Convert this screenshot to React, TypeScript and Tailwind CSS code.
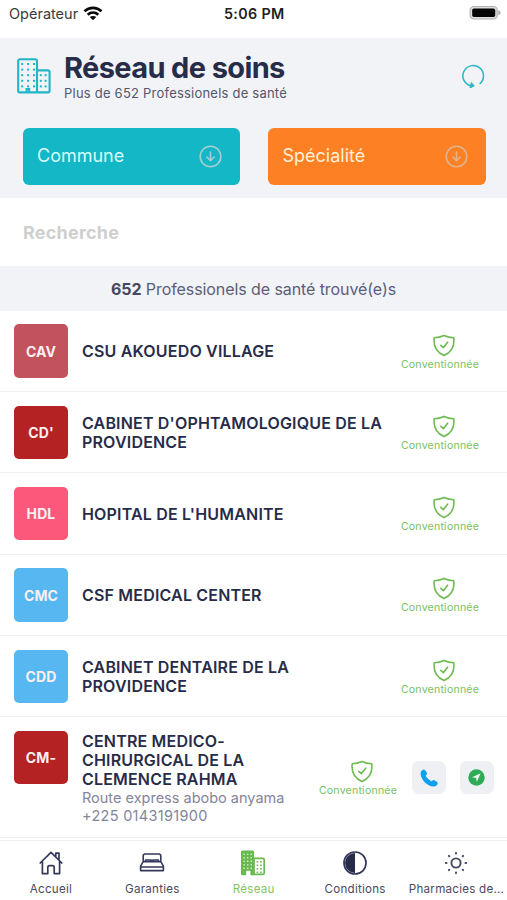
import React from 'react';

type Provider = {
  initials: string;
  lines: string[];
  color: string;
  address?: string;
  phone?: string;
};

const providers: Provider[] = [
  { initials: 'CAV', lines: ['CSU AKOUEDO VILLAGE'], color: 'bg-[#c2525c]' },
  { initials: "CD'", lines: ["CABINET D'OPHTAMOLOGIQUE DE LA", 'PROVIDENCE'], color: 'bg-[#b42224]' },
  { initials: 'HDL', lines: ["HOPITAL DE L'HUMANITE"], color: 'bg-[#fb587c]' },
  { initials: 'CMC', lines: ['CSF MEDICAL CENTER'], color: 'bg-[#56b7f1]' },
  { initials: 'CDD', lines: ['CABINET DENTAIRE DE LA', 'PROVIDENCE'], color: 'bg-[#56b7f1]' },
  {
    initials: 'CM-',
    lines: ['CENTRE MEDICO-', 'CHIRURGICAL DE LA', 'CLEMENCE RAHMA'],
    color: 'bg-[#b42224]',
    address: 'Route express abobo anyama',
    phone: '+225 0143191900',
  },
];

const tallWindows = [0, 1, 2].flatMap((i) => [0, 1, 2, 3, 4].map((r) => [4.2 + i * 5.9, 5 + r * 5.6]));
const lowWindows = [0, 1].flatMap((i) => [0, 1, 2].map((r) => [22.8 + i * 4.8, 16.2 + r * 5.6]));

function BuildingOutline() {
  return (
    <svg className="block h-[36px] w-[34px]" viewBox="0 0 34 36" fill="none" stroke="#22b5c6">
      <path d="M1.2 33.8V3.2Q1.2 1.2 3.2 1.2H18Q20 1.2 20 3.2V33.8M20 12.4H30.6Q32.6 12.4 32.6 14.4V32.8Q32.6 34.4 31 34.4H2.6Q1.2 34.4 1.2 33M9.6 34V31H12.2V34" strokeWidth="2.1" />
      <g fill="#22b5c6" stroke="none">
        {tallWindows.map(([x, y]) => <rect key={`${x}-${y}`} x={x} y={y} width="2" height="2" />)}
        {lowWindows.map(([x, y]) => <rect key={`${x}-${y}`} x={x} y={y} width="2" height="2" />)}
      </g>
    </svg>
  );
}

function BuildingFilled() {
  return (
    <svg className="block size-[26px]" viewBox="0 0 26 26" fill="none">
      <path d="M1 24V2Q1 .6 2.4 .6H12.6Q14 .6 14 2V25.2H10.4V20.8H6.2V25.2H2.2Q1 25.2 1 24Z" fill="#6ab94e" />
      <path d="M14 8.4H22.8Q24.2 8.4 24.2 9.8V23Q24.2 24.4 22.8 24.4H14Z" stroke="#6ab94e" strokeWidth="1.7" />
      <g fill="#d9f0d0">
        {[0, 1, 2].flatMap((c) => [0, 1, 2, 3, 4].map((r) => (
          <rect key={`${c}${r}`} x={3.4 + c * 3.6} y={3.6 + r * 3.5} width="1.4" height="1.4" />
        )))}
      </g>
      <g fill="#6ab94e">
        {[0, 1].flatMap((c) => [0, 1, 2, 3].map((r) => (
          <rect key={`${c}${r}`} x={16.6 + c * 3.5} y={11 + r * 3.5} width="1.6" height="1.6" />
        )))}
      </g>
    </svg>
  );
}

function Shield() {
  return (
    <svg className="ml-[7px] block h-[23px] w-[24px]" viewBox="0 0 24 23" fill="none" stroke="#6fbb53" strokeWidth="1.6" strokeLinecap="round" strokeLinejoin="round">
      <path d="M12 1.4C9.2 2.7 5.5 3.6 2.2 3.8C1.3 12 4.4 18.2 12 21.6C19.6 18.2 22.7 12 21.8 3.8C18.5 3.6 14.8 2.7 12 1.4Z" />
      <path d="M8.8 11.4L11.3 13.7L15.6 8.2" />
    </svg>
  );
}

function Covered() {
  return (
    <div className="flex w-[82px] shrink-0 flex-col items-center">
      <Shield />
      <span className="mt-[1px] text-[10.6px] leading-[14px] tracking-[0.2px] text-[#79c25f]">Conventionnée</span>
    </div>
  );
}

function Dropdown({ label, tone, ring }: { label: string; tone: string; ring: string }) {
  return (
    <button className={`flex h-[57.5px] w-[217.5px] items-center justify-between rounded-[6px] pl-[14.5px] pr-[18px] ${tone}`}>
      <span className="text-[18px] leading-6">{label}</span>
      <svg className={`block size-[23px] ${ring}`} viewBox="0 0 23 23" fill="none" stroke="currentColor" strokeWidth="1.6" strokeLinecap="round" strokeLinejoin="round">
        <circle cx="11.5" cy="11.5" r="10.3" />
        <path d="M11.5 7V15.5M7.8 12L11.5 15.7L15.2 12" />
      </svg>
    </button>
  );
}

function Row({ p }: { p: Provider }) {
  const detailed = Boolean(p.phone);
  return (
    <li className={`flex border-b border-[#eff0f3] pl-[14.3px] ${detailed ? 'h-[120.4px]' : 'h-[81.3px]'}`}>
      <div className={`mt-[13.6px] flex size-[53.4px] shrink-0 items-center justify-center rounded-[5px] text-[14px] font-bold tracking-[0.1px] text-[#fbeff0] ${p.color}`}>
        {p.initials}
      </div>
      <div className={`ml-[14.3px] flex flex-1 flex-col justify-center whitespace-nowrap ${detailed ? 'pt-[2px]' : 'pt-[1.5px]'}`}>
        {p.lines.map((line) => (
          <p key={line} className="text-[16px] font-semibold leading-[19px] tracking-[0.18px] text-[#272c49]">{line}</p>
        ))}
        {p.address && <p className="text-[14.5px] leading-[18px] tracking-[0px] text-[#84859a]">{p.address}</p>}
        {p.phone && <p className="text-[14.5px] leading-[17px] tracking-[0.3px] text-[#84859a]">{p.phone}</p>}
      </div>
      {detailed ? (
        <div className="flex items-center pr-[13.5px] pt-[1px]">
          <div className="pt-[3px]"><Covered /></div>
          <div className="ml-[13px] flex size-[33.5px] items-center justify-center rounded-[7px] bg-[#eef0f4]">
            <svg className="block size-[20px]" viewBox="0 0 20 20" fill="#0da0ec">
              <path d="M4.8 1.5C3.2 1.7 1.5 3.2 1.6 5.4C2 12 8.4 18.2 14.5 18.4C16.8 18.5 18.6 16.8 18.8 15.2C18.9 14.4 15.5 12 14.6 12C13.7 12 13.2 13.3 12.4 13.2C10.7 12.8 7.2 9.3 6.9 7.8C6.8 7 8.1 6.4 8 5.4C7.9 4.3 5.7 1.4 4.8 1.5Z" />
            </svg>
          </div>
          <div className="ml-[14.5px] flex size-[33.5px] items-center justify-center rounded-[7px] bg-[#eef0f4]">
            <svg className="block size-[17px]" viewBox="0 0 17 17">
              <circle cx="8.5" cy="8.5" r="8.2" fill="#2faa55" />
              <path d="M12.7 4.2L4 8.2L8.1 8.9L8.8 13Z" fill="#eef6f1" />
            </svg>
          </div>
        </div>
      ) : (
        <div className="flex items-center pr-[26px] pt-[3px]"><Covered /></div>
      )}
    </li>
  );
}

function Tab({ label, active, children }: { label: string; active?: boolean; children: React.ReactNode }) {
  return (
    <div className="flex w-[101.4px] flex-col items-center whitespace-nowrap">
      <div className="flex h-[26px] items-center justify-center">{children}</div>
      <span className={`mt-[5px] pl-[0.5px] text-[11.6px] leading-[16px] tracking-[0.24px] ${active ? 'text-[#7fc566]' : 'text-[#474a60]'}`}>{label}</span>
    </div>
  );
}

export default function App() {
  return (
    <div className="flex h-[900px] w-[507px] flex-col overflow-hidden bg-white font-[Inter,sans-serif]">
      <div className="flex h-[37.5px] shrink-0 items-start pl-[9px] pr-[6px]">
        <div className="flex w-[215px] items-center pt-[4px]">
          <span className="text-[14.5px] leading-[20px] text-[#3a3a3a]">Opérateur</span>
          <svg className="ml-[5px] block h-[15px] w-[20px] -translate-y-[1px]" viewBox="0 0 20 15" fill="none" stroke="#0a0a0a" strokeWidth="2.7">
            <path d="M1.5 5.3C6.3 .7 13.7 .7 18.5 5.3M4.7 8.7C7.8 5.9 12.2 5.9 15.3 8.7" />
            <path d="M10 14.2L6.7 11C8.6 9.5 11.4 9.5 13.3 11Z" fill="#0a0a0a" stroke="none" />
          </svg>
        </div>
        <span className="pt-[4px] text-[14.3px] font-semibold leading-[20px] tracking-[0.35px] text-[#1e1e1e]">5:06 PM</span>
        <div className="flex flex-1 justify-end pt-[5px]">
          <svg className="block h-[16px] w-[32px]" viewBox="0 0 32 16">
            <rect x="1.2" y="1.5" width="27" height="12.5" rx="3.6" fill="#ddd" stroke="#b3b3b3" strokeWidth="1.2" />
            <rect x="3.2" y="3.5" width="23" height="8.5" rx="1.7" fill="#050505" />
            <path d="M29.4 5.3Q31.6 6 31.6 7.8Q31.6 9.5 29.4 10.2Z" fill="#aaa" />
          </svg>
        </div>
      </div>

      <header className="h-[160.3px] shrink-0 bg-[#f1f3f7]">
        <div className="flex h-[90px] items-start pl-[17px] pr-[22px]">
          <div className="pt-[20px]"><BuildingOutline /></div>
          <div className="ml-[13px] flex-1 whitespace-nowrap pt-[12.6px]">
            <h1 className="text-[29px] font-bold leading-[35px] tracking-[-0.63px] text-[#272c49]">Réseau de soins</h1>
            <p className="-mt-[0.6px] text-[13px] leading-[16px] tracking-[0.22px] text-[#54576c]">Plus de 652 Professionels de santé</p>
          </div>
          <svg className="mt-[26px] block size-[24px]" viewBox="0 0 24 24" fill="none" stroke="#2bb5c7" strokeWidth="1.5">
            <path d="M18.6 19.9A10.3 10.3 0 1 0 10.4 22" />
            <path d="M10.4 18.6L13.2 21.9L9 24Z" fill="#2bb5c7" strokeWidth="1" />
          </svg>
        </div>
        <div className="flex justify-between pl-[22.5px] pr-[21.5px]">
          <Dropdown label="Commune" tone="bg-[#13b7c5] text-[#d9fbfb]" ring="text-[#a3ced2]" />
          <Dropdown label="Spécialité" tone="bg-[#fd8124] text-[#ffeeda]" ring="text-[#e3b28d]" />
        </div>
      </header>

      <div className="flex h-[68px] shrink-0 items-center pl-[23px] pt-[2px] text-[18px] font-bold tracking-[0.22px] text-[#cfcfcf]">Recherche</div>

      <div className="flex h-[45.1px] shrink-0 items-center justify-center bg-[#f1f3f7] pt-[1px] text-[16px] tracking-[-0.08px] text-[#5b5e78]">
        <p><b className="font-bold text-[#45485f]">652</b> Professionels de santé trouvé(e)s</p>
      </div>

      <ul className="shrink-0">
        {providers.map((p) => <Row key={p.initials} p={p} />)}
      </ul>

      <nav className="mt-[2.5px] flex flex-1 border-t border-[#eceef0] pt-[9px]">
        <Tab label="Accueil">
          <svg className="block size-[26px]" viewBox="0 0 26 26" fill="none" stroke="#34385a" strokeWidth="1.7" strokeLinecap="round" strokeLinejoin="round">
            <path d="M2.2 13L13 2.4L23.8 13M4.4 11.5V23.6H9.8V17.4Q9.8 15.6 11.6 15.6H14.4Q16.2 15.6 16.2 17.4V23.6H21.6V11.5M17.8 6V3.2H21V9.5" />
          </svg>
        </Tab>
        <Tab label="Garanties">
          <svg className="block size-[26px]" viewBox="0 0 26 26" fill="none" stroke="#34385a" strokeWidth="1.6" strokeLinejoin="round">
            <path d="M4.2 11.8V6Q4.2 4 6.2 4H19.8Q21.8 4 21.8 6V11.8M1.6 20.6V16.2L4.2 11.6H21.8L24.4 16.2V20.6ZM1.6 17H24.4" />
            <path d="M6.6 11.4V10H12.2V11.4M13.8 11.4V10H19.4V11.4" />
          </svg>
        </Tab>
        <Tab label="Réseau" active><BuildingFilled /></Tab>
        <Tab label="Conditions">
          <svg className="block size-[26px]" viewBox="0 0 26 26" fill="none">
            <circle cx="13" cy="13" r="11" stroke="#34385a" strokeWidth="1.7" />
            <path d="M13 3A10 10 0 0 0 13 23Z" fill="#272c49" />
          </svg>
        </Tab>
        <Tab label="Pharmacies de...">
          <svg className="block size-[26px]" viewBox="0 0 26 26" fill="none" stroke="#44475f" strokeWidth="2" strokeLinecap="round">
            <circle cx="13" cy="13" r="4.6" strokeWidth="1.9" />
            <path d="M13 2.9V3.5M13 22.5V23.1M2.9 13H3.5M22.5 13H23.1M5.9 5.9L6.3 6.3M19.7 19.7L20.1 20.1M5.9 20.1L6.3 19.7M19.7 6.3L20.1 5.9" />
          </svg>
        </Tab>
      </nav>
    </div>
  );
}
